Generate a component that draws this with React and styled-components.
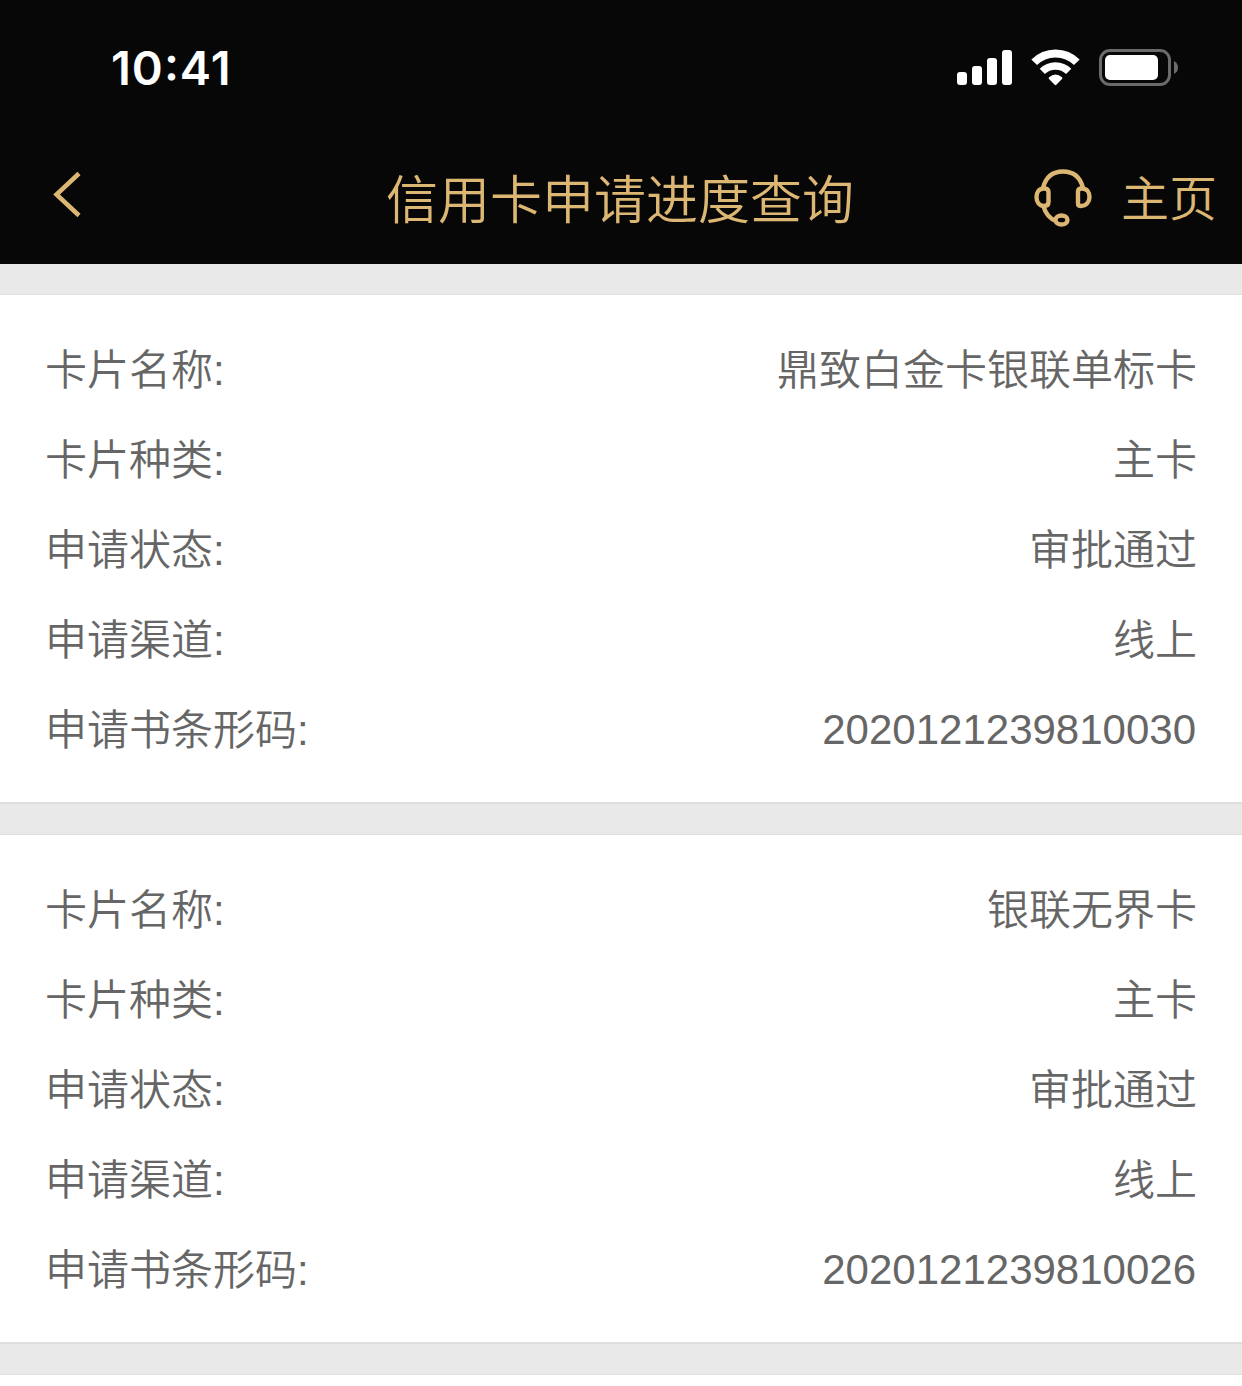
import React from "react"
import styled, { createGlobalStyle } from "styled-components"

const applications = [
  {
    name: "鼎致白金卡银联单标卡",
    type: "主卡",
    status: "审批通过",
    channel: "线上",
    barcode: "2020121239810030",
  },
  {
    name: "银联无界卡",
    type: "主卡",
    status: "审批通过",
    channel: "线上",
    barcode: "2020121239810026",
  },
]

const fields = [
  { key: "name", label: "卡片名称:" },
  { key: "type", label: "卡片种类:" },
  { key: "status", label: "申请状态:" },
  { key: "channel", label: "申请渠道:" },
  { key: "barcode", label: "申请书条形码:", numeric: true },
]

export default function App() {
  return (
    <Page>
      <GlobalStyle />
      <Header>
        <StatusBar />
        <NavBar />
      </Header>
      <List>
        {applications.map(item => (
          <ApplicationCard key={item.barcode} item={item} />
        ))}
      </List>
      <NextCard />
    </Page>
  )
}

function StatusBar() {
  return (
    <StatusWrapper>
      <Time>10:41</Time>
      <Indicators width="224" height="40" viewBox="0 0 224 40">
        <g fill="#fff">
          <rect x="1" y="24" width="10" height="13" rx="3" />
          <rect x="16" y="18" width="10" height="19" rx="3" />
          <rect x="31" y="10" width="10" height="27" rx="3" />
          <rect x="46" y="2" width="10" height="35" rx="3" />
        </g>
        <g fill="none" stroke="#fff">
          <path d="M78.2 14.3 A30 30 0 0 1 120.8 14.3" strokeWidth="8" />
          <path d="M86.3 23.4 A18.7 18.7 0 0 1 112.7 23.4" strokeWidth="7.4" />
        </g>
        <path
          d="M93 29.2 Q99.5 23.8 106 29.2 Q106.8 30.1 106 31 L100.3 36.8 Q99.5 37.6 98.7 36.8 L93 31 Q92.2 30.1 93 29.2Z"
          fill="#fff"
        />
        <rect
          x="144.5"
          y="2.5"
          width="69"
          height="34"
          rx="9.5"
          fill="none"
          stroke="#6b6b6b"
          strokeWidth="3"
        />
        <rect x="149" y="7" width="53" height="25" rx="5" fill="#fff" />
        <path d="M218 13 Q222 15 222 19.5 Q222 24 218 26Z" fill="#6b6b6b" />
      </Indicators>
    </StatusWrapper>
  )
}

function NavBar() {
  return (
    <NavWrapper>
      <NavSide>
        <BackIcon width="32" height="50" viewBox="0 0 32 50">
          <path d="M28 3.5 L5.5 24.5 L28 45.5" />
        </BackIcon>
      </NavSide>
      <Title>信用卡申请进度查询</Title>
      <NavSide $end>
        <HeadsetIcon width="60" height="60" viewBox="0 0 60 60">
          <path d="M10 20 C13 8 21 3.5 30 3.5 C39 3.5 47 8 50 20" />
          <path d="M11 20.5 C5.5 20.5 3.5 25 3.5 29 C3.5 33.5 6 38 11 38 C14 38 15.5 36.5 15.5 34 V24 Q15.5 20.5 11 20.5Z" />
          <path d="M49 20.5 C54.5 20.5 56.5 25 56.5 29 C56.5 34 53 38 48 38 Q45 38 45 35.5 V23.5 Q45 20.5 49 20.5Z" />
          <path d="M10.5 38 C12 45 17 51 23 53" />
          <ellipse cx="28.5" cy="52" rx="6" ry="4.5" />
        </HeadsetIcon>
        <HomeLink>主页</HomeLink>
      </NavSide>
    </NavWrapper>
  )
}

function ApplicationCard({ item }) {
  return (
    <Card>
      {fields.map(({ key, label, numeric }) => (
        <Row key={key}>
          <Label>{label}</Label>
          <Value $numeric={numeric}>{item[key]}</Value>
        </Row>
      ))}
    </Card>
  )
}

const GlobalStyle = createGlobalStyle`
  * {
    box-sizing: border-box;
  }
  body {
    margin: 0;
    background: #e9e9e9;
    font-family: "Liberation Sans", "Noto Sans CJK SC", sans-serif;
  }
`
const Page = styled.div`
  width: 1242px;
  height: 1386px;
  overflow: hidden;
  display: flex;
  flex-direction: column;
  background: #e9e9e9;
`
const Header = styled.header`
  flex: none;
  height: 264px;
  background: #070707;
`
const StatusWrapper = styled.div`
  display: flex;
  justify-content: space-between;
  align-items: center;
  height: 132px;
  padding: 4px 62px 0 111px;
`
const Time = styled.span`
  color: #fff;
  font-family: Inter, sans-serif;
  font-size: 47px;
  font-weight: 600;
  line-height: 56px;
  letter-spacing: 1px;
  font-feature-settings: "case";
`
const Indicators = styled.svg`
  display: block;
`
const NavWrapper = styled.nav`
  display: grid;
  grid-template-columns: 1fr auto 1fr;
  align-items: center;
  height: 132px;
  padding: 0 25px;
  color: #dcb673;
`
const NavSide = styled.div`
  display: flex;
  align-items: center;
  justify-content: ${props => (props.$end ? "flex-end" : "flex-start")};
`
const BackIcon = styled.svg`
  margin: 0 0 7px 26px;
  fill: none;
  stroke: #dcb673;
  stroke-width: 4.5;
`
const HeadsetIcon = styled.svg`
  margin-right: 28px;
  fill: none;
  stroke: #dcb673;
  stroke-width: 4.4;
`
const Title = styled.h1`
  margin: 0 2px 3px 0;
  font-family: "Noto Sans CJK SC", sans-serif;
  font-size: 52px;
  font-weight: 350;
  line-height: 72px;
`
const HomeLink = styled.span`
  margin-bottom: 6px;
  font-family: "Noto Sans CJK SC", sans-serif;
  font-size: 48px;
  font-weight: 350;
  line-height: 66px;
`
const List = styled.main`
  display: flex;
  flex-direction: column;
  flex: none;
  gap: 30px;
  padding: 30px 0;
`
const Card = styled.section`
  height: 510px;
  padding: 30px 45px 0;
  background: #fff;
  border-top: 1px solid #dedede;
  border-bottom: 2px solid #dedede;
`
const Row = styled.div`
  display: flex;
  justify-content: space-between;
  align-items: center;
  height: 90px;
  color: #666;
  font-size: 42px;
  font-weight: 350;
  line-height: 60px;
`
const Label = styled.span`
  padding-top: 1px;
`
const Value = styled.span`
  padding-top: ${props => (props.$numeric ? 0 : "1px")};
  padding-right: ${props => (props.$numeric ? "1px" : 0)};
  text-align: right;
`
const NextCard = styled.section`
  flex: 1;
  background: #fff;
  border-top: 1px solid #dedede;
`
